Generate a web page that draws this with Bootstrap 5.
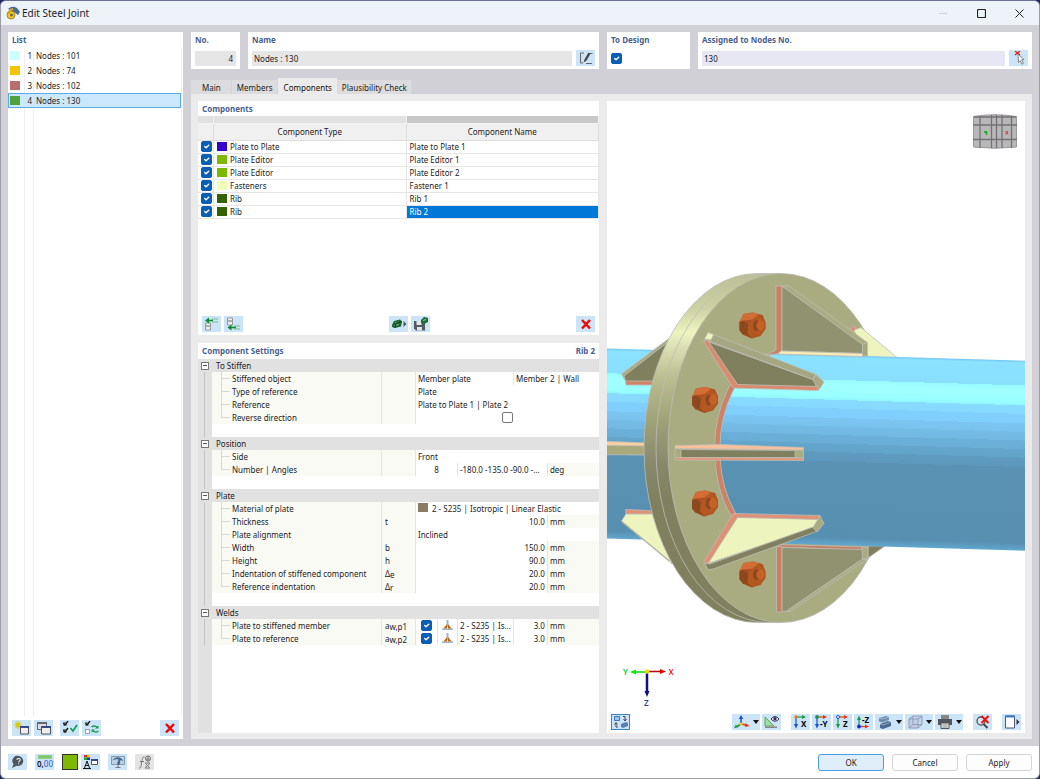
<!DOCTYPE html>
<html lang="en">
<head>
<meta charset="utf-8">
<meta name="viewport" content="width=device-width, initial-scale=1">
<title>Edit Steel Joint</title>
<link href="https://cdn.jsdelivr.net/npm/bootstrap@5.3.0/dist/css/bootstrap.min.css" rel="stylesheet">
<style>
:root{--ui-blue:#4b5f8c;--btn:#cce4f7;--gut:#d0d0d6}
body{font:8px/13px "Noto Sans","Open Sans",sans-serif;color:#1c1c1c;background:#1f2a66}
button,input{font:inherit;color:inherit}
.win{background:var(--gut);border:1px solid #9a9ca8;border-top-color:#6b7096;border-radius:6px;overflow:hidden}
.titlebar{height:24px;background:#eef3fa;font-size:10px;padding:0 15px 0 5px;gap:2px}
.titlebar button{border:0;background:none;padding:0;line-height:0}
.winbtns{gap:29px}
.work{padding:7px;gap:8px}
.side{flex:0 0 175px;background:#fff}
.cap{color:var(--ui-blue);font-weight:700;line-height:15px;padding:0 4px;margin:0;font-size:8px}
.side .cap,.settings .cap{line-height:16px}
.items{--bs-list-group-border-radius:0;border-right:1px solid #eee;margin-right:1px;
  background:linear-gradient(#eee,#eee) 16px 0/1px 100% no-repeat,linear-gradient(#eee,#eee) 25px 0/1px 100% no-repeat}
.items .list-group-item{display:flex;align-items:center;height:15px;padding:0 1px;border:1px solid transparent;background:none;font-size:8px;color:inherit}
.items .list-group-item.picked{background:#cce8ff;border-color:#5aabea}
.items .num{width:12px;text-align:right;margin-right:4px}
.sw{width:10px;height:9px;flex:none;display:inline-block}
.ib{width:19px;height:16px;background:var(--btn);border:0;padding:0;display:inline-flex;align-items:center;justify-content:center;flex:none}
.ib svg{width:16px;height:14px;display:block;overflow:visible}
.ib.dd{width:28px;gap:3px}
.ib.dd::after{content:"";border:3px solid transparent;border-top:4px solid #111;border-bottom:0}
.ib.off{background:#e4e4e4}
.ib.on{border:1px solid #3c84bc}
.ib.swatch-btn{width:16px;background:#7cb900;border:1px solid #333}
.top-row{display:grid;grid-template-columns:49px minmax(0,351fr) 83px minmax(0,334fr);gap:8px}
.box{background:#fff;height:37px;padding:0 4px}
.box .cap{padding:0;display:block}
.box .line{gap:4px;padding-top:3px;height:19px;align-items:center}
.field{border:0;background:#e6e6e6;height:15px;min-width:0;width:100%;padding:1px 3px 0 2px;outline:0}
.field.lav{background:#e6e7f3}
.form-check-input{width:11px;height:11px;margin:0;min-height:0;border-radius:2px;border-color:#777;display:block;float:none}
.form-check-input:checked{background-color:#0a5fb5;border-color:#0a5fb5}
.tabs{margin-top:8px;border:0;height:17px;align-items:flex-end;flex-wrap:nowrap}
.tabs .nav-link{border:0;border-radius:0;background:#dcdcde;color:#1c1c1c;height:15px;line-height:16px;padding:0 5px;box-shadow:inset -1px 0 #d4d4d8}
.tabs .nav-item:first-child .nav-link{padding:0 11px}
.tabs .nav-link.active{background:#ebebeb;height:17px;line-height:20px;color:#111;box-shadow:none;padding-left:6px}
.pane{background:#ebebeb;display:grid;grid-template-columns:minmax(0,401fr) minmax(0,418fr);gap:8px;padding:7px 7px 6px}
.panel{background:#fff;min-width:0}
.comp{height:234px}
.grid-t{width:100%;table-layout:fixed;border-collapse:separate;border-spacing:0}
.grid-t td,.grid-t th{padding:0;height:13px;line-height:12px;font-weight:400;white-space:nowrap;overflow:hidden}
.comps th{background:#f0f0f0;text-align:center;height:16px;line-height:16px;border-right:1px solid #ddd;border-bottom:1px solid #ddd}
.comps .strip th{height:8px;line-height:7px;background:#e1e1e1;border-color:#f2f2f2}
.comps .strip th:last-child{background:#c8c8c8}
.comps td{border-bottom:1px solid #e6e6e6;border-right:1px solid #e6e6e6;padding-left:3px}
.comps td .sw{vertical-align:top;margin:1px 3px 0 0}
.comps td .form-check-input{margin-bottom:1px}
.comps td.cur{background:#0078d7;color:#fff}
.tools{padding:0 4px 3px;gap:3px}
.sets{background:linear-gradient(#e1e1e1,#e1e1e1) 0 0/14px 100% no-repeat}
.sets tr.cat th{background:#e1e1e1;line-height:13px}
.sets tr.cat th+th{padding-left:4px}
.sets td:first-child,.sets th:first-child{background:linear-gradient(#c4c4c4,#c4c4c4) 6px 0/1px 100% no-repeat #e1e1e1}
.sets tr.cat button{width:8px;height:8px;margin-left:3px;border:1px solid #777;background:linear-gradient(#555,#555) center/4px 1px no-repeat #fff;padding:0;display:block}
.sets .lab{background:#fafaf5;padding-left:20px;position:relative;border-right:1px solid #e4e4e4}
.sets .lab::before{content:"";position:absolute;left:9px;top:0;width:1px;height:13px;background:#d8d8d8}
.sets .lab::after{content:"";position:absolute;left:9px;top:6px;width:9px;height:1px;background:#d8d8d8}
.sets .last .lab::before{height:7px}
.sets .sym{background:#fafaf5;padding-left:3px;border-right:1px solid #e4e4e4}
.sets .sym sub{font-size:8px;bottom:-1px}
.sets .v{padding-left:2px}
.sets .r{text-align:right;padding-right:2px}
.sets .bl{border-right:1px solid #e4e4e4}
.sets .u{background:#fafaf5;padding-left:2px}
.sets .form-check-input{margin:0 auto}
.sets .wi{width:11px;height:11px;display:block;margin:0 auto}
.view{min-height:300px}
.view .scene{position:relative;min-height:0}
.view .scene svg{position:absolute;inset:0;width:100%;height:100%}
.vbar{gap:2px;padding:3px 4px}
.vbar .brk{margin-right:8px}
.foot{background:#fff;height:32px;padding:0 7px;gap:8px}
.foot .pair{gap:3px}
.act{width:66px;height:17px;border:1px solid #d4d4d4;border-radius:3px;background:#fdfdfd;padding:0;line-height:15px;font-size:8px;color:#1c1c1c}
.act.main{background:#e0eef9;border-color:#4a9fe0}
</style>
</head>
<body>
<svg width="0" height="0" class="position-absolute" aria-hidden="true">
  <defs>
    <symbol id="i-x" viewBox="0 0 16 14"><path d="M4 3l8 8.500M12 3l-8 8.500" stroke="#f00808" stroke-width="2.500"/></symbol>
    <symbol id="i-new" viewBox="0 0 16 14"><path d="M4 0v8M0 4h8M1.500 1.500l5 5M6.500 1.500l-5 5" stroke="#d6c800" stroke-width="1.200"/><path d="M6.500 5.500h8v7.500h-8z" fill="#eee" stroke="#555"/><path d="M6 5h9v2H6z" fill="#3a4a88"/></symbol>
    <symbol id="i-copy" viewBox="0 0 16 14"><path d="M1.500 1.500h9v7h-9z" fill="#ddd" stroke="#666"/><path d="M1 1h10v2H1z" fill="#667"/><path d="M5.500 5.500h9v7.500h-9z" fill="#eee" stroke="#555"/><path d="M5 5h10v2H5z" fill="#3a4a88"/></symbol>
    <symbol id="i-chk" viewBox="0 0 16 14"><path d="M1.500 1.500h3v3h-3zM1.500 8.500h3v3h-3z" fill="#fff" stroke="#777" stroke-width=".8"/><path d="M1.500 2l1.500 2 3-4M1.500 9l1.500 2 3-4" fill="none" stroke="#111" stroke-width="1.300"/><path d="M8.500 7l2.500 3 4-6" fill="none" stroke="#12a050" stroke-width="1.700"/></symbol>
    <symbol id="i-inv" viewBox="0 0 16 14"><path d="M1.500 1.500h3v3h-3zM1.500 8.500h4v4h-4z" fill="#fff" stroke="#888" stroke-width=".8"/><path d="M1.500 2l1.500 2 3-4" fill="none" stroke="#111" stroke-width="1.300"/><path d="M7.500 6c2-1.500 4-1.500 6 .5M14.500 10c-2 1.500-4 1.500-6-.5" fill="none" stroke="#12a050" stroke-width="1.400"/><path d="M14.500 4.500v3H11zM7.500 11.500v-3H11z" fill="#12a050"/></symbol>
    <symbol id="i-edit" viewBox="0 0 16 14"><path d="M6 2H2.500v10H5M8 12.500h6M12 2.500h2.500" fill="none" stroke="#666"/><path d="M5.500 11.500l1-3 4-7 2 1.200-4.200 7z" fill="#444"/></symbol>
    <symbol id="i-pick" viewBox="0 0 16 14"><path d="M4 0l5 4M9 0L4 4" stroke="#e02020" stroke-width="1.300"/><path d="M7 3l6 5.500-2.500.3 2 3.500-1.500.9-1.800-3.500L7.500 11.500z" fill="#fff" stroke="#777" stroke-width=".9"/></symbol>
    <symbol id="i-insa" viewBox="0 0 16 14"><path d="M1.500 6h5v3h-5zM1.500 9h5v4h-5z" fill="#eee" stroke="#999"/><path d="M8 2h6M8 5h6" stroke="#7fb98c"/><path d="M3 3.500h6" stroke="#0c8a34" stroke-width="1.600"/><path d="M1 3.500L5 .5v6z" fill="#0c8a34"/></symbol>
    <symbol id="i-insb" viewBox="0 0 16 14"><path d="M1.500 1h5v3h-5zM1.500 4h5v4h-5z" fill="#eee" stroke="#999"/><path d="M8 9h6M8 12h6" stroke="#7fb98c"/><path d="M4 10.500h6" stroke="#0c8a34" stroke-width="1.600"/><path d="M1.500 10.500l4-3v6z" fill="#0c8a34"/></symbol>
    <symbol id="i-lib" viewBox="0 0 16 14"><path d="M1 8l2-4 6-1.500 2 2-1 5L4 11l-3-1z" fill="#1d6436"/><path d="M4 6l4-1M3.500 8.500l4-1" stroke="#8fca9c"/><path d="M4 11l1-5 6-1.500" stroke="#0e3d1e" fill="none"/><path d="M12.500 4v6l3-3z" fill="#555"/></symbol>
    <symbol id="i-save" viewBox="0 0 16 14"><path d="M1 4h11v9.500H3L1 11.500z" fill="#555a60"/><path d="M3.500 4h5v4h-5zM4 10h5v3.500H4z" fill="#dfe6ea"/><path d="M8 3l3-3 4 1v4l-4 2-3-1z" fill="#24693a"/><path d="M10 3.500l3-1" stroke="#9fd0aa"/></symbol>
    <symbol id="i-help" viewBox="0 0 16 14"><path d="M8.500 1a5 5 0 1 1-2 9.700L2 13l1.500-4A5 5 0 0 1 8.500 1z" fill="#4c545c"/><path d="M7 5c0-2.500 3.600-2 3.200 0C10 6 8.600 6 8.600 7.500M8.600 8.500v1" fill="none" stroke="#d5e4ee" stroke-width="1.200"/></symbol>
    <symbol id="i-num" viewBox="0 0 16 14" overflow="visible"><path d="M1 0h14v4H1z" fill="#8fd17f"/><path d="M3 1v1.500M5 1v1.500M7 1v1.500M9 1v1.500M11 1v1.500M13 1v1.500" stroke="#5aa34c" stroke-width=".7"/><text x="0" y="12" font-size="8" font-weight="600" fill="#111">0,<tspan fill="#2458d8" font-weight="400">00</tspan></text></symbol>
    <symbol id="i-disp" viewBox="0 0 16 14"><path d="M1 0h3v2.500H1z" fill="#e22"/><path d="M4 0h3v2.500H4z" fill="#ec0"/><path d="M1 2.500h3V5H1z" fill="#2a2"/><path d="M4 2.500h3V5H4z" fill="#22d"/><path d="M1.500 13L4 6l2.500 7M2.500 10.500h3M0 13.500h8" stroke="#111" fill="none"/><path d="M8.500 4.500h6v5h-6z" fill="#fff" stroke="#555"/><path d="M8 4h7v2H8z" fill="#3a4a88"/></symbol>
    <symbol id="i-mon" viewBox="0 0 16 14"><path d="M1.500 1.500h13v8h-13z" fill="#b9d2e6" stroke="#8899a8"/><path d="M5.500 12.500h5M8 9v3" stroke="#778"/><path d="M2.500 5.500C5 1 11 1 13.500 6l-3-1-1 5-2.500-1 1.500-4.500C6 4 4.500 4.500 2.500 5.500z" fill="#446a90"/></symbol>
    <symbol id="i-fx" viewBox="0 0 16 14"><path d="M2 13c2 .5 2-2 2.500-5s1-7 3-6M3 6.500h4M8 8h5M8 12.500l5-4M8.500 8.500l4 4M8 13h5" fill="none" stroke="#777"/><path d="M11 1v6M8.500 4h5" stroke="#777"/><circle cx="11" cy="3.500" r="2.500" fill="none" stroke="#777"/></symbol>
    <symbol id="i-sw" viewBox="0 0 16 14"><path d="M1.500 1.500h5v4h-5z" fill="#9fc6f0" stroke="#3a78c8"/><path d="M10 1.500h2v4M10.500 4l1.500 2 1.500-2M5 12H3V8M1.500 9.500l1.500-2 1.500 2" fill="none" stroke="#445"/><path d="M8 9l5-2 2 1v3l-5 2-2-1z" fill="#5a7fae"/></symbol>
    <symbol id="i-axes" viewBox="0 0 16 14"><path d="M7 9V3" stroke="#1850d8" stroke-width="1.500"/><path d="M4.800 4L7 0l2.200 4z" fill="#1850d8"/><path d="M7 9l-4 2.500" stroke="#17983c" stroke-width="1.500"/><path d="M0 13l2-3.500 2 3z" fill="#17983c"/><path d="M7 9l5 1" stroke="#e03818" stroke-width="1.500"/><path d="M11.500 8l4 3-4.500 1z" fill="#e03818"/><circle cx="7" cy="9" r="1.500" fill="#f4d400"/></symbol>
    <symbol id="i-eye" viewBox="0 0 16 14"><path d="M1 2l9 9H1z" fill="#a9dca4" stroke="#5aa65a"/><path d="M1 11.500h12v1.500H1z" fill="#888"/><path d="M7 4q4-5 8 0-4 4.500-8 0z" fill="#fff" stroke="#335"/><circle cx="11" cy="3.800" r="1.700" fill="#335"/></symbol>
    <symbol id="a-x" viewBox="0 0 16 14"><path d="M3 2h7" stroke="#17984a" stroke-width="1.200"/><path d="M9 0l4 2-4 2z" fill="#17984a"/><path d="M3 2v8" stroke="#1850d8" stroke-width="1.200"/><path d="M1 9h4l-2 4.500z" fill="#1850d8"/><circle cx="3" cy="2" r="1.700" fill="#f07820"/></symbol>
    <symbol id="a-y" viewBox="0 0 16 14"><path d="M3 2h7" stroke="#e03818" stroke-width="1.200"/><path d="M9 0l4 2-4 2z" fill="#e03818"/><path d="M3 2v8" stroke="#1850d8" stroke-width="1.200"/><path d="M1 9h4l-2 4.500z" fill="#1850d8"/><circle cx="3" cy="2" r="1.900" fill="#17984a"/></symbol>
    <symbol id="a-z" viewBox="0 0 16 14"><path d="M3 2h7" stroke="#e03818" stroke-width="1.200"/><path d="M9 0l4 2-4 2z" fill="#e03818"/><path d="M3 2v8" stroke="#17984a" stroke-width="1.200"/><path d="M1 9h4l-2 4.500z" fill="#17984a"/><circle cx="3" cy="2" r="1.500" fill="#fff" stroke="#1850d8"/></symbol>
    <symbol id="a-mz" viewBox="0 0 16 14"><path d="M3 11.500h7" stroke="#e03818" stroke-width="1.200"/><path d="M9 9.500l4 2-4 2z" fill="#e03818"/><path d="M3 11V4" stroke="#17984a" stroke-width="1.200"/><path d="M1 5h4L3 .5z" fill="#17984a"/><circle cx="3" cy="11.500" r="1.900" fill="#1830c8"/></symbol>
    <symbol id="i-solid" viewBox="0 0 16 14"><path d="M2 3l7-2 3 1v3L5 7.500 2 6.500z" fill="#6f8cb0"/><path d="M3 9l8-3 3 1v4l-8 3-3-1z" fill="#4a6a94"/><path d="M3 9l3 1 8-3M2 3l3 1 7-2" stroke="#b8cce0" stroke-width=".6" fill="none"/></symbol>
    <symbol id="i-cube" viewBox="0 0 16 14"><path d="M2 4l4-3h9v8.500L11 13H2zM2 4h9v9M11 4l4-3M6 1v8.500h9M6 9.500L2 13" fill="#c3cfe4" stroke="#8a96b4" stroke-width=".9"/></symbol>
    <symbol id="i-print" viewBox="0 0 16 14"><path d="M4 0h8v4H4z" fill="#888"/><path d="M1 4h14v6H1z" fill="#4f5660"/><path d="M4 8h8v5.500H4z" fill="#e8e8e8" stroke="#555"/><path d="M5.500 10h5M5.500 12h5" stroke="#777" stroke-width=".8"/></symbol>
    <symbol id="i-nozoom" viewBox="0 0 16 14"><circle cx="6" cy="6" r="4" fill="#dbe6ee" stroke="#555" stroke-width="1.300"/><path d="M8.500 9l4 4" stroke="#444" stroke-width="2"/><path d="M6.500 1l7 7M13.500 1l-7 7" stroke="#e81010" stroke-width="2"/></symbol>
    <symbol id="i-dock" viewBox="0 0 16 14"><path d="M1.500 1h9v12h-9z" fill="#fff" stroke="#557"/><path d="M1 .5h10v2H1z" fill="#3f78c4"/><path d="M12.500 4v6l3-3z" fill="#333"/></symbol>
    <symbol id="i-weld" viewBox="0 0 11 11"><path d="M4.500 0h2v7h-2z" fill="#9db3d0"/><path d="M0 8.500h11v1.500H0z" fill="#9db3d0"/><path d="M5 4v4.500H1.500zM6 4v4.500h3.500z" fill="#b8661a"/></symbol>
    <symbol id="bolt" viewBox="-14 -14 28 28" overflow="visible">
      <path d="M-13-3l4-8.500 9-1.500 10 2.500 3 7v7l-5 7-9 2.500-9-4-3-5z" fill="#ad5223"/>
      <path d="M-13-3l4-2 5 4-1 9-4 1.500-4-4.500z" fill="#8e481d"/><path d="M-5 8l6 5-9-4z" fill="#8e481d"/>
      <path d="M-9-11.500l9-1.500 6 2-6 5-9 1-4 1z" fill="#d26d35"/><path d="M0-6l6-5 6 6 1 7-5 7-9 3-4-4 1-9z" fill="#b45822"/>
      <ellipse cx="6" cy="0" rx="5.500" ry="6" fill="#bd5c26"/><ellipse cx="4" cy="0" rx="3.500" ry="5.500" fill="#8e481d"/><ellipse cx="8" cy="0" rx="4" ry="5" fill="#c66127"/>
    </symbol>
  </defs>
</svg>

<div class="win d-flex flex-column vh-100">
  <header class="titlebar d-flex align-items-center">
    <svg width="14" height="14" viewBox="0 0 14 14" aria-hidden="true"><path d="M2 3q4-4 9-1l3 4-2 3-4-3z" fill="#4a6a98"/><circle cx="5" cy="9" r="4" fill="#f0c630" stroke="#a8861c"/><path d="M3 8q0-4 4-5" stroke="#d8a820" stroke-width="2" fill="none"/><circle cx="5.500" cy="9" r="1.500" fill="#7b6a3a"/></svg>
    <span>Edit Steel Joint</span>
    <div class="winbtns ms-auto d-flex">
      <button aria-label="Minimize" disabled><svg width="9" height="9"><path d="M0 4.500h8" stroke="#ccd2d8"/></svg></button>
      <button aria-label="Maximize"><svg width="9" height="9"><rect x=".5" y=".5" width="8" height="8" rx="1" fill="none" stroke="#222" stroke-width="1.200"/></svg></button>
      <button aria-label="Close"><svg width="9" height="9"><path d="M.5.5l8 8M8.500.5l-8 8" stroke="#222"/></svg></button>
    </div>
  </header>

  <main class="work d-flex flex-grow-1 overflow-hidden">
    <aside class="side d-flex flex-column">
      <h2 class="cap">List</h2>
      <div class="items list-group flex-grow-1">
        <button class="list-group-item list-group-item-action"><span class="sw" style="background:#ccffff"></span><span class="num">1</span>Nodes : 101</button>
        <button class="list-group-item list-group-item-action"><span class="sw" style="background:#f5c400"></span><span class="num">2</span>Nodes : 74</button>
        <button class="list-group-item list-group-item-action"><span class="sw" style="background:#b86e6e"></span><span class="num">3</span>Nodes : 102</button>
        <button class="list-group-item list-group-item-action picked" aria-current="true"><span class="sw" style="background:#50a33c"></span><span class="num">4</span>Nodes : 130</button>
      </div>
      <div class="tools d-flex pt-1">
        <button class="ib" aria-label="New"><svg><use href="#i-new"/></svg></button>
        <button class="ib me-1" aria-label="Copy"><svg><use href="#i-copy"/></svg></button>
        <button class="ib" aria-label="Select all"><svg><use href="#i-chk"/></svg></button>
        <button class="ib" aria-label="Invert selection"><svg><use href="#i-inv"/></svg></button>
        <button class="ib ms-auto" aria-label="Delete"><svg><use href="#i-x"/></svg></button>
      </div>
    </aside>

    <div class="flex-grow-1 d-flex flex-column" style="min-width:0">
      <div class="top-row">
        <div class="box"><label class="cap" for="no">No.</label><div class="line d-flex"><input id="no" class="field text-end" value="4" readonly></div></div>
        <div class="box"><label class="cap" for="nm">Name</label><div class="line d-flex"><input id="nm" class="field" value="Nodes : 130"><button class="ib" aria-label="Edit name"><svg><use href="#i-edit"/></svg></button></div></div>
        <div class="box"><label class="cap" for="td">To Design</label><div class="line d-flex"><input id="td" type="checkbox" class="form-check-input" checked></div></div>
        <div class="box"><label class="cap" for="asg">Assigned to Nodes No.</label><div class="line d-flex"><input id="asg" class="field lav" value="130"><button class="ib" aria-label="Pick nodes"><svg><use href="#i-pick"/></svg></button></div></div>
      </div>

      <ul class="nav nav-tabs tabs">
        <li class="nav-item"><a class="nav-link" href="#">Main</a></li>
        <li class="nav-item"><a class="nav-link" href="#">Members</a></li>
        <li class="nav-item"><a class="nav-link active" href="#" aria-current="page">Components</a></li>
        <li class="nav-item"><a class="nav-link" href="#">Plausibility Check</a></li>
      </ul>

      <div class="pane flex-grow-1" style="min-height:0">
        <div class="d-flex flex-column gap-2" style="min-width:0">
          <section class="panel comp d-flex flex-column">
            <h2 class="cap">Components</h2>
            <table class="grid-t comps">
              <colgroup><col style="width:16px"><col><col></colgroup>
              <thead>
                <tr class="strip"><th></th><th></th><th></th></tr>
                <tr><th></th><th scope="col">Component Type</th><th scope="col">Component Name</th></tr>
              </thead>
              <tbody>
                <tr><td><input type="checkbox" class="form-check-input" aria-label="Plate to Plate 1" checked></td><td><span class="sw" style="background:#3300cc"></span>Plate to Plate</td><td>Plate to Plate 1</td></tr>
                <tr><td><input type="checkbox" class="form-check-input" aria-label="Plate Editor 1" checked></td><td><span class="sw" style="background:#7cb900"></span>Plate Editor</td><td>Plate Editor 1</td></tr>
                <tr><td><input type="checkbox" class="form-check-input" aria-label="Plate Editor 2" checked></td><td><span class="sw" style="background:#7cb900"></span>Plate Editor</td><td>Plate Editor 2</td></tr>
                <tr><td><input type="checkbox" class="form-check-input" aria-label="Fastener 1" checked></td><td><span class="sw" style="background:#efffb8"></span>Fasteners</td><td>Fastener 1</td></tr>
                <tr><td><input type="checkbox" class="form-check-input" aria-label="Rib 1" checked></td><td><span class="sw" style="background:#336000"></span>Rib</td><td>Rib 1</td></tr>
                <tr><td><input type="checkbox" class="form-check-input" aria-label="Rib 2" checked></td><td><span class="sw" style="background:#336000"></span>Rib</td><td class="cur">Rib 2</td></tr>
              </tbody>
            </table>
            <div class="tools d-flex mt-auto">
              <button class="ib" aria-label="Insert above"><svg><use href="#i-insa"/></svg></button>
              <button class="ib" aria-label="Insert below"><svg><use href="#i-insb"/></svg></button>
              <button class="ib ms-auto" aria-label="Load from library"><svg><use href="#i-lib"/></svg></button>
              <button class="ib" aria-label="Save to library"><svg><use href="#i-save"/></svg></button>
              <button class="ib ms-auto" aria-label="Delete component"><svg><use href="#i-x"/></svg></button>
            </div>
          </section>

          <section class="panel settings flex-grow-1 d-flex flex-column">
            <h2 class="cap d-flex justify-content-between"><span>Component Settings</span><span>Rib 2</span></h2>
            <div class="sets flex-grow-1">
              <table class="grid-t">
                <colgroup><col style="width:14px"><col><col style="width:34px"><col style="width:22px"><col style="width:20px"><col style="width:56px"><col style="width:34px"><col style="width:51px"></colgroup>
                <tbody>
                  <tr class="cat"><th><button aria-label="Collapse To Stiffen"></button></th><th colspan="7">To Stiffen</th></tr>
                  <tr><td></td><td class="lab">Stiffened object</td><td class="sym"></td><td class="v bl" colspan="3">Member plate</td><td class="v" colspan="2">Member 2 | Wall</td></tr>
                  <tr><td></td><td class="lab">Type of reference</td><td class="sym"></td><td class="v" colspan="5">Plate</td></tr>
                  <tr><td></td><td class="lab">Reference</td><td class="sym"></td><td class="v" colspan="5">Plate to Plate 1 | Plate 2</td></tr>
                  <tr class="last"><td></td><td class="lab">Reverse direction</td><td class="sym"></td><td colspan="5"><input type="checkbox" class="form-check-input" aria-label="Reverse direction"></td></tr>
                  <tr><td></td><td colspan="7"></td></tr>
                  <tr class="cat"><th><button aria-label="Collapse Position"></button></th><th colspan="7">Position</th></tr>
                  <tr><td></td><td class="lab">Side</td><td class="sym"></td><td class="v" colspan="5">Front</td></tr>
                  <tr class="last"><td></td><td class="lab">Number | Angles</td><td class="sym"></td><td class="bl text-center" colspan="2">8</td><td class="v bl" colspan="2">-180.0 -135.0 -90.0 -...</td><td class="u">deg</td></tr>
                  <tr><td></td><td colspan="7"></td></tr>
                  <tr class="cat"><th><button aria-label="Collapse Plate"></button></th><th colspan="7">Plate</th></tr>
                  <tr><td></td><td class="lab">Material of plate</td><td class="sym"></td><td class="v" colspan="5"><span class="sw me-1 align-text-top" style="background:#8c7b64"></span>2 - S235 | Isotropic | Linear Elastic</td></tr>
                  <tr><td></td><td class="lab">Thickness</td><td class="sym">t</td><td class="r bl" colspan="4">10.0</td><td class="u">mm</td></tr>
                  <tr><td></td><td class="lab">Plate alignment</td><td class="sym"></td><td class="v" colspan="5">Inclined</td></tr>
                  <tr><td></td><td class="lab">Width</td><td class="sym">b</td><td class="r bl" colspan="4">150.0</td><td class="u">mm</td></tr>
                  <tr><td></td><td class="lab">Height</td><td class="sym">h</td><td class="r bl" colspan="4">90.0</td><td class="u">mm</td></tr>
                  <tr><td></td><td class="lab">Indentation of stiffened component</td><td class="sym">Δ<sub>e</sub></td><td class="r bl" colspan="4">20.0</td><td class="u">mm</td></tr>
                  <tr class="last"><td></td><td class="lab">Reference indentation</td><td class="sym">Δ<sub>r</sub></td><td class="r bl" colspan="4">20.0</td><td class="u">mm</td></tr>
                  <tr><td></td><td colspan="7"></td></tr>
                  <tr class="cat"><th><button aria-label="Collapse Welds"></button></th><th colspan="7">Welds</th></tr>
                  <tr><td></td><td class="lab">Plate to stiffened member</td><td class="sym">a<sub>w,p1</sub></td><td class="bl"><input type="checkbox" class="form-check-input" aria-label="Weld to stiffened member" checked></td><td class="bl"><svg class="wi"><use href="#i-weld"/></svg></td><td class="v bl">2 - S235 | Is...</td><td class="r bl">3.0</td><td class="u">mm</td></tr>
                  <tr class="last"><td></td><td class="lab">Plate to reference</td><td class="sym">a<sub>w,p2</sub></td><td class="bl"><input type="checkbox" class="form-check-input" aria-label="Weld to reference" checked></td><td class="bl"><svg class="wi"><use href="#i-weld"/></svg></td><td class="v bl">2 - S235 | Is...</td><td class="r bl">3.0</td><td class="u">mm</td></tr>
                </tbody>
              </table>
            </div>
          </section>
        </div>

        <section class="panel view d-flex flex-column">
          <div class="scene flex-grow-1">
            <svg viewBox="607 101 418 610" preserveAspectRatio="xMidYMid slice" role="img" aria-label="Flanged pipe joint with ribs and bolts">
              <defs>
                <linearGradient id="pipe" x1="0" y1="348.500" x2="0" y2="538.500" gradientUnits="userSpaceOnUse">
                  <stop offset="0" stop-color="#74c4f4"/><stop offset=".012" stop-color="#8ae2ff"/><stop offset=".13" stop-color="#8adfff"/><stop offset=".13" stop-color="#97fbff"/><stop offset=".16" stop-color="#a2ffff"/><stop offset=".215" stop-color="#9affff"/><stop offset=".235" stop-color="#92f6ff"/><stop offset=".235" stop-color="#88dcff"/><stop offset=".28" stop-color="#86d8ff"/><stop offset=".28" stop-color="#80cffd"/><stop offset=".33" stop-color="#80cefc"/><stop offset=".33" stop-color="#7cc5f2"/><stop offset=".375" stop-color="#7ac2ee"/><stop offset=".375" stop-color="#74bbe5"/><stop offset=".42" stop-color="#72b8e2"/><stop offset=".42" stop-color="#6bb0d9"/><stop offset=".465" stop-color="#6aaed6"/><stop offset=".465" stop-color="#64a6cc"/><stop offset=".51" stop-color="#62a3c8"/><stop offset=".51" stop-color="#5e9bc0"/><stop offset=".56" stop-color="#5c98bb"/><stop offset=".56" stop-color="#5992b3"/><stop offset=".96" stop-color="#578fb0"/><stop offset="1" stop-color="#62a8d0"/>
                </linearGradient>
                <linearGradient id="rim" x1="0" y1="273" x2="0" y2="623" gradientUnits="userSpaceOnUse">
                  <stop offset="0" stop-color="#bcbf92"/><stop offset=".1" stop-color="#ccd0a3"/><stop offset=".17" stop-color="#eef4c0"/><stop offset=".22" stop-color="#d8dcb0"/><stop offset=".3" stop-color="#babd90"/><stop offset=".42" stop-color="#a0a278"/><stop offset=".55" stop-color="#86886a"/><stop offset=".65" stop-color="#80805e"/><stop offset="1" stop-color="#80805e"/>
                </linearGradient>
                <clipPath id="front"><path d="M1100 300V600H780V544A60 95 0 0 1 780 354V300z"/></clipPath>
              </defs>
              <g transform="translate(607 0) skewY(1.68)"><rect x="-100" y="348.500" width="160" height="190" fill="url(#pipe)"/></g>
              <g stroke="#bdbdb8" stroke-width=".8">
                <path d="M621.500 374L671 337V382H626z" fill="#a9ab80"/><path d="M624 376L668 342V382H626z" fill="#80805e"/><path d="M625.500 381H660V385H626z" fill="#cf8266"/>
                <path d="M500 442L610 441.500 650 443V447H500z" fill="#fad0a0"/><path d="M500 444L650 446V455L500 454z" fill="#a9a97c"/>
                <path d="M625.500 509.500L660 511V515H626z" fill="#df9278"/><path d="M626 514H660L672 564 621.500 521z" fill="#eef4be"/><path d="M621.500 521L670 561 668 560 624 524z" fill="#80805e"/>
                <path d="M757 273.500A113 174.500 0 0 0 757 622.500H781V273.500z" fill="url(#rim)"/>
                <path d="M769 273.500A113 174.500 0 0 0 769 622.500" fill="none"/>
                <ellipse cx="781" cy="448" rx="113" ry="174.500" fill="#a9ab80"/>
                <path d="M868 546H885L868 558z" fill="#80805e"/>
                <path d="M854 330L861 327.500 897 357.500H866z" fill="#eef4be"/><path d="M852.500 325.500L856 328 853 332 850 329z" fill="#d98f73"/>
              </g>
              <g clip-path="url(#front)"><g transform="translate(607 0) skewY(1.68)"><rect x="80" y="348.500" width="420" height="190" fill="url(#pipe)"/></g></g>
              <path d="M767 356A60 95 0 0 0 780 544.500" fill="none" stroke="#bdbdb8" stroke-width="6"/><path d="M767 356A60 95 0 0 0 780 544.500" fill="none" stroke="#cb8267" stroke-width="4.500"/>
              <g stroke="#bdbdb8" stroke-width=".8" stroke-linejoin="round">
                <path d="M776 286H782V351L776 354 766 355 776 350z" fill="#c88064"/>
                <path d="M782 286L863 344V353.500L782 351z" fill="#91926f"/><path d="M782 286H789L867.500 342.500 862.500 344.500z" fill="#a9ab80"/><path d="M862.500 344L867.500 342.500V356H862.500z" fill="#a5a77d"/><path d="M781 351L862.500 353.500V356.500L778 354z" fill="#fbedb4"/>
                <path d="M776 544.500L862 547V550L776 547z" fill="#c87c60"/><path d="M776.500 546.500H782V612H776.500z" fill="#c88064"/><path d="M782 547.500L862.500 549.500V559L786 611.500H782z" fill="#91926f"/><path d="M862.500 559L867 559.500 790 611.500H786z" fill="#a9ab80"/><path d="M862 547H868V558L862.500 559z" fill="#a9ab80"/>
                <path d="M706 341L813 379.500 818 387 737 385z" fill="#80805e"/><path d="M708 332.500L816 374.500 813 379.500 706 340z" fill="#a5a781"/><path d="M816 374.500L824 382 818.500 390.500 813 379.500z" fill="#a9a983"/><path d="M708 332.500L713.500 334.500 711 340 704.500 339z" fill="#eef4be"/><path d="M703.500 341L707.500 340 737.500 384.500 818 386.500V390.500L733 388z" fill="#d98b6e"/>
                <path d="M708 563.500L737 517 819 519 813.500 527.500z" fill="#eef4be"/><path d="M705 563.500L710 564 813 527 818 531 713 569 708 569.500z" fill="#80805e"/><path d="M820 516L824 523.500 817 532 813 527.500z" fill="#a9ab80"/><path d="M703.500 562L733 513.500 820 515.500 818 519.500 737.500 517.500 708 563.500z" fill="#df9176"/>
                <path d="M675 448.500L803.500 450V458L675 457.500z" fill="#a9ab80"/><path d="M681 449.500L795 450.500V457.500H681z" fill="#80805e"/><path d="M675 445.500L720 444.500 803.500 447.500V450L675 448.500z" fill="#fac09a"/><path d="M675 457.500L803.500 458V460.500L675 460z" fill="#e59474"/>
              </g>
              <use href="#bolt" x="738.500" y="311.500" width="28" height="28"/><use href="#bolt" x="691" y="386" width="28" height="28"/><use href="#bolt" x="691" y="489.500" width="28" height="28"/><use href="#bolt" x="738.500" y="560.500" width="28" height="28"/>
              <g stroke="#757277" fill="#b8b8b8"><path d="M973.500 116.500Q995 113 1016.500 116.500V147Q995 149.500 973.500 147z" stroke="#999"/><path d="M980 116V148M991.500 115V148M996.500 115V148M1002 115V148M1011.500 116V148M973 125H1017M973 139.500H1017M974 117H1016" fill="none" stroke-width="1.300"/></g>
              <path d="M984 132h3M986.500 131v4" stroke="#1ba020" stroke-width="1.400"/><path d="M1005.500 131l2.500 3.500M1008 131l-2.500 3.500" stroke="#d03030"/>
              <path d="M634 672H647" stroke="#00dc00" stroke-width="1.500"/><path d="M630 672L636 669.500V674.500z" fill="#00f000"/><path d="M647 671.500H661" stroke="#b00" stroke-width="1.500"/><path d="M666 671.500L660 669V674z" fill="#e00000"/><path d="M647 672V692" stroke="#101080" stroke-width="2.500"/><path d="M644.500 691H649.500L647 697z" fill="#101080"/><circle cx="647" cy="671.500" r="2.200" fill="#f0e000"/>
              <g font-size="8" font-weight="600"><text x="623" y="675" fill="#00d020">Y</text><text x="668.500" y="675" fill="#f01010">X</text><text x="644" y="706" fill="#3a3a9c">Z</text></g>
            </svg>
          </div>
          <div class="vbar d-flex">
            <button class="ib on me-auto" aria-label="Toggle view"><svg><use href="#i-sw"/></svg></button>
            <button class="ib dd" aria-label="Axes"><svg><use href="#i-axes"/></svg></button>
            <button class="ib brk" aria-label="Show dimensions"><svg><use href="#i-eye"/></svg></button>
            <button class="ib" aria-label="View X"><svg><use href="#a-x"/><text x="8" y="12" font-size="8" font-weight="700">X</text></svg></button>
            <button class="ib" aria-label="View -Y"><svg><use href="#a-y"/><text x="6" y="12" font-size="8" font-weight="700">-Y</text></svg></button>
            <button class="ib" aria-label="View Z"><svg><use href="#a-z"/><text x="8" y="12" font-size="8" font-weight="700">Z</text></svg></button>
            <button class="ib" aria-label="View -Z"><svg><use href="#a-mz"/><text x="6" y="8" font-size="8" font-weight="700">-Z</text></svg></button>
            <button class="ib dd" aria-label="Shading"><svg><use href="#i-solid"/></svg></button>
            <button class="ib dd" aria-label="Box view"><svg><use href="#i-cube"/></svg></button>
            <button class="ib dd brk" aria-label="Print"><svg><use href="#i-print"/></svg></button>
            <button class="ib brk" aria-label="Reset zoom"><svg><use href="#i-nozoom"/></svg></button>
            <button class="ib" aria-label="Dock"><svg><use href="#i-dock"/></svg></button>
          </div>
        </section>
      </div>
    </div>
  </main>

  <footer class="foot d-flex align-items-center">
    <button class="ib" aria-label="Help"><svg><use href="#i-help"/></svg></button>
    <button class="ib" aria-label="Units"><svg><use href="#i-num"/></svg></button>
    <div class="pair d-flex">
      <button class="ib swatch-btn" aria-label="Colour"></button>
      <button class="ib" aria-label="Display"><svg><use href="#i-disp"/></svg></button>
    </div>
    <button class="ib" aria-label="Screen"><svg><use href="#i-mon"/></svg></button>
    <button class="ib off" aria-label="Formula" disabled><svg><use href="#i-fx"/></svg></button>
    <button class="act main ms-auto">OK</button>
    <button class="act">Cancel</button>
    <button class="act">Apply</button>
  </footer>
</div>
<script src="https://cdn.jsdelivr.net/npm/bootstrap@5.3.0/dist/js/bootstrap.bundle.min.js"></script>
</body>
</html>
